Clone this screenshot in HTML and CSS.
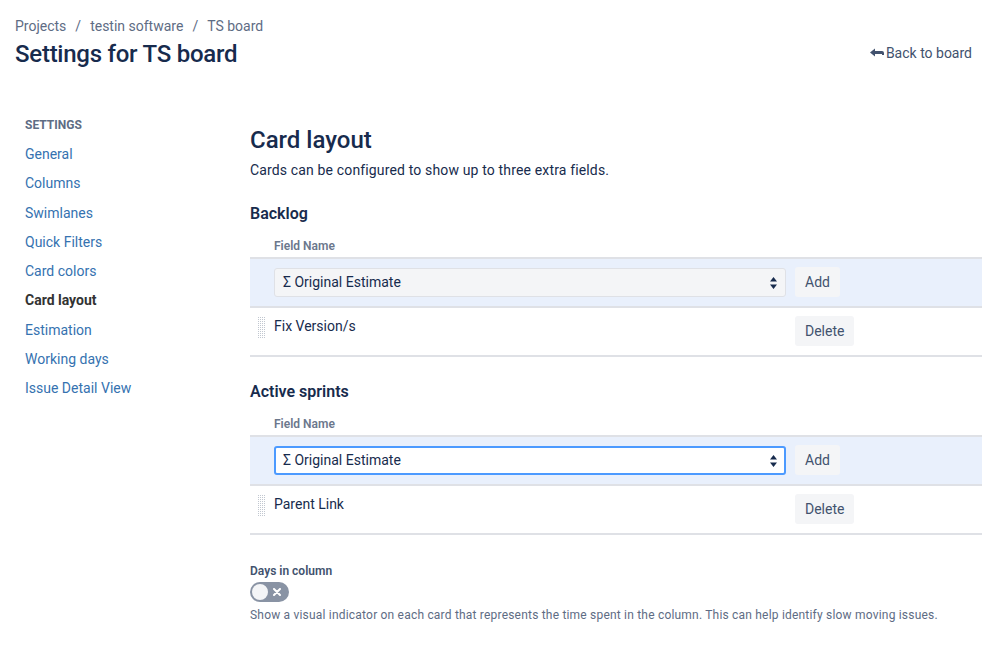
FILE: index.html
```html
<!DOCTYPE html>
<html>
<head>
<meta charset="utf-8">
<link rel="stylesheet" href="styles.css">
</head>
<body>
<header class="page-header">
  <div class="header-left">
    <nav class="breadcrumbs">
      <a>Projects</a><span class="sep">/</span><a>testin software</a><span class="sep">/</span><a>TS board</a>
    </nav>
    <h1 class="page-title">Settings for TS board</h1>
  </div>
  <a class="back-link">
    <svg class="back-icon" width="14" height="10" viewBox="0 0 14 10"><path d="M0 4.5 L5 0.5 L5 3 L12 3 Q14 3 14 5 L14 7 L12 7 L12 6 L5 6 L5 8.5 Z" fill="#42526e"/></svg>Back to board
  </a>
</header>
<div class="layout">
  <aside class="sidebar">
    <div class="sidebar-title">SETTINGS</div>
    <ul class="nav">
      <li><a>General</a></li>
      <li><a>Columns</a></li>
      <li><a>Swimlanes</a></li>
      <li><a>Quick Filters</a></li>
      <li><a>Card colors</a></li>
      <li class="active"><a>Card layout</a></li>
      <li><a>Estimation</a></li>
      <li><a>Working days</a></li>
      <li><a>Issue Detail View</a></li>
    </ul>
  </aside>
  <main class="main">
    <h2 class="section-title">Card layout</h2>
    <p class="desc">Cards can be configured to show up to three extra fields.</p>

    <h3 class="group-title">Backlog</h3>
    <div class="field-head">Field Name</div>
    <div class="table">
      <div class="row row-add">
        <div class="handle-cell"></div>
        <div class="select">Σ Original Estimate<span class="arrows"><svg width="7" height="12" viewBox="0 0 7 12"><path d="M3.5 0 L7 4.5 L0 4.5 Z M3.5 12 L7 7.5 L0 7.5 Z" fill="#172b4d"/></svg></span></div>
        <button class="btn">Add</button>
      </div>
      <div class="row row-item">
        <div class="handle-cell"><span class="handle"></span></div>
        <div class="item-name">Fix Version/s</div>
        <button class="btn">Delete</button>
      </div>
    </div>

    <h3 class="group-title second">Active sprints</h3>
    <div class="field-head">Field Name</div>
    <div class="table">
      <div class="row row-add">
        <div class="handle-cell"></div>
        <div class="select focused">Σ Original Estimate<span class="arrows"><svg width="7" height="12" viewBox="0 0 7 12"><path d="M3.5 0 L7 4.5 L0 4.5 Z M3.5 12 L7 7.5 L0 7.5 Z" fill="#172b4d"/></svg></span></div>
        <button class="btn">Add</button>
      </div>
      <div class="row row-item">
        <div class="handle-cell"><span class="handle"></span></div>
        <div class="item-name">Parent Link</div>
        <button class="btn">Delete</button>
      </div>
    </div>

    <div class="days">
      <div class="days-label">Days in column</div>
      <div class="toggle"><span class="knob"></span><svg class="toggle-x" width="8" height="8" viewBox="0 0 8 8"><path d="M1 1 L7 7 M7 1 L1 7" stroke="#fff" stroke-width="2" stroke-linecap="round"/></svg></div>
      <div class="days-help">Show a visual indicator on each card that represents the time spent in the column. This can help identify slow moving issues.</div>
    </div>
  </main>
</div>
</body>
</html>
```
FILE: styles.css
```css
* { box-sizing: border-box; }
body {
  margin: 0;
  font-family: Roboto, "Liberation Sans", Arial, sans-serif;
  color: #172b4d;
  background: #fff;
  font-size: 14px;
}
a { text-decoration: none; cursor: pointer; }

.page-header {
  display: flex;
  justify-content: space-between;
  align-items: flex-start;
  padding: 16px 27px 0 15px;
}
.breadcrumbs {
  font-size: 14px;
  line-height: 20px;
  color: #5e6c84;
}
.breadcrumbs a { color: #5e6c84; }
.breadcrumbs .sep { margin: 0 9px; }
.page-title {
  margin: 4px 0 0;
  font-size: 24px;
  line-height: 28px;
  font-weight: 500;
  letter-spacing: -0.25px;
  color: #172b4d;
}
.back-link {
  margin-top: 27px;
  font-size: 14px;
  line-height: 20px;
  color: #42526e;
  display: flex;
  align-items: center;
}
.back-icon { margin-right: 2px; }

.layout {
  display: flex;
  padding-top: 49px;
}
.sidebar {
  width: 250px;
  padding-left: 25px;
  flex-shrink: 0;
}
.sidebar-title {
  font-size: 12px;
  line-height: 16px;
  font-weight: 700;
  color: #5e6c84;
  margin-bottom: 7px;
}
.nav { list-style: none; margin: 0; padding: 0; }
.nav li { line-height: 29.3px; font-size: 14px; }
.nav li a { color: #3572b0; }
.nav li.active a { color: #333; font-weight: 700; }

.main {
  width: 732px;
  padding-top: 9px;
}
.section-title {
  margin: 0;
  font-size: 24px;
  line-height: 28px;
  font-weight: 500;
  color: #172b4d;
}
.desc {
  margin: 6px 0 0;
  font-size: 14px;
  line-height: 20px;
  letter-spacing: 0.15px;
  color: #172b4d;
}
.group-title {
  margin: 24px 0 0;
  font-size: 16px;
  line-height: 20px;
  font-weight: 600;
  color: #172b4d;
}
.group-title.second { margin-top: 25px; }
.field-head {
  margin-top: 14px;
  padding-left: 24px;
  font-size: 12px;
  line-height: 16px;
  font-weight: 600;
  color: #6b778c;
  padding-bottom: 3px;
}
.table {
  border-top: 2px solid #dfe1e6;
}
.row {
  display: flex;
  align-items: flex-start;
  border-bottom: 2px solid #dfe1e6;
}
.row-add {
  background: #e9f0fc;
  padding: 8px 0 8px;
  height: 49px;
}
.row-item {
  padding: 8px 0;
  height: 49px;
}
.handle-cell {
  width: 24px;
  flex-shrink: 0;
  padding-left: 8px;
}
.handle {
  display: block;
  width: 8px;
  height: 22px;
  margin-top: 1px;
  background-color: #c1c7d0;
  background-image:
    linear-gradient(to right, transparent 1px, #fff 1px),
    linear-gradient(to bottom, transparent 1px, #fff 1px);
  background-size: 2px 2px;
}
.select {
  width: 512px;
  height: 29px;
  margin-top: 1px;
  margin-right: 9px;
  border: 1px solid #dfe1e6;
  border-radius: 3px;
  background: #f4f5f7;
  padding: 0 8px;
  font-size: 14px;
  line-height: 27px;
  color: #172b4d;
  display: flex;
  justify-content: space-between;
  align-items: center;
}
.select.focused {
  border: 2px solid #4c9aff;
  background: #fff;
  padding: 0 7px;
}
.arrows { display: flex; align-items: center; }
.item-name {
  width: 512px;
  margin-right: 9px;
  font-size: 14px;
  line-height: 20px;
  color: #172b4d;
}
.btn {
  height: 30px;
  border: none;
  border-radius: 3px;
  background: #f4f5f7;
  color: #42526e;
  font-family: inherit;
  font-size: 14px;
  padding: 0 10px;
  line-height: 30px;
}
.days { margin-top: 28px; }
.days-label {
  font-size: 12px;
  line-height: 16px;
  font-weight: 600;
  color: #42526e;
}
.toggle {
  margin-top: 3px;
  width: 39px;
  height: 20px;
  border-radius: 10px;
  background: #8993a4;
  display: flex;
  align-items: center;
  justify-content: space-between;
  padding: 0 8px 0 2px;
}
.knob {
  width: 16px;
  height: 16px;
  border-radius: 50%;
  background: #f4f5f7;
}
.days-help {
  margin-top: 5px;
  font-size: 12px;
  line-height: 16px;
  letter-spacing: 0.2px;
  color: #5e6c84;
}
```
